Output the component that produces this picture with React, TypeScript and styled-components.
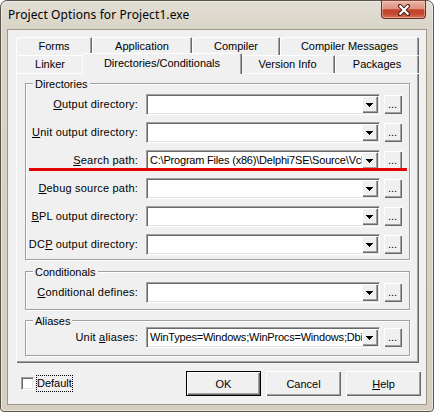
import React from "react";
import styled, { createGlobalStyle } from "styled-components";

const Global = createGlobalStyle`
  html, body { margin: 0; padding: 0; background: #ffffff; }
  body { font-family: "Liberation Sans", Arial, sans-serif; font-size: 11px; color: #000; }
  * { box-sizing: border-box; }
`;

const Window = styled.div`
  width: 434px;
  height: 412px;
  border: 1px solid #5a554c;
  border-radius: 7px 7px 4px 4px;
  background: linear-gradient(to bottom, #e2ded5 0px, #d9d4c7 28px, #d6cfbf 100%);
  box-shadow: inset 0 0 0 1px rgba(255, 255, 255, 0.45);
  display: flex;
  flex-direction: column;
`;

const TitleBar = styled.div`
  height: 28px;
  flex: none;
  display: flex;
  align-items: flex-start;
  justify-content: space-between;
  padding: 0 7px;
`;

const Title = styled.div`
  font-family: "Noto Sans", "Open Sans", sans-serif;
  font-size: 12px;
  line-height: 16px;
  padding-top: 6px;
  color: #000;
  letter-spacing: 0.1px;
`;

const CloseButton = styled.div`
  width: 45px;
  height: 19px;
  margin-top: -1px;
  border: 1px solid #6b2f25;
  border-top-color: #7a4a40;
  border-radius: 0 0 4px 4px;
  background: linear-gradient(
    to bottom,
    #eab5a7 0%,
    #de917f 45%,
    #c4432d 52%,
    #c54630 75%,
    #d8715b 100%
  );
  box-shadow: inset 0 0 0 1px rgba(255, 220, 210, 0.45);
  display: flex;
  align-items: center;
  justify-content: center;
`;

const Client = styled.div`
  flex: 1;
  margin: 0 6px 6px 6px;
  border: 1px solid #9d978a;
  background: #f0f0f0;
  display: flex;
  flex-direction: column;
  padding: 7px 7px 7px 8px;
`;

const TabStrip = styled.div`
  display: flex;
  flex-direction: column;
`;

const TabRow = styled.div`
  display: flex;
  height: 18px;
`;

const Tab = styled.div<{ $w: number; $active?: boolean }>`
  flex: none;
  width: ${(p) => p.$w + (p.$active ? 4 : 0)}px;
  height: ${(p) => (p.$active ? 21 : 18)}px;
  margin: ${(p) => (p.$active ? "-2px -2px 0 -2px" : "0")};
  padding-top: ${(p) => (p.$active ? 1 : 0)}px;
  position: ${(p) => (p.$active ? "relative" : "static")};
  z-index: ${(p) => (p.$active ? 2 : "auto")};
  background: #f0f0f0;
  border-radius: 2px 2px 0 0;
  box-shadow: inset 1px 1px 0 #ffffff, inset -1px 0 0 #696969, inset -2px 0 0 #a0a0a0;
  text-align: center;
  line-height: 18px;
  white-space: nowrap;
`;

const Page = styled.div`
  height: 290px;
  padding: 10px 9px 6px 9px;
  background: #f0f0f0;
  box-shadow: inset 1px 1px 0 #ffffff, inset -1px -1px 0 #696969, inset -2px -2px 0 #a0a0a0;
  display: flex;
  flex-direction: column;
`;

const Group = styled.div<{ $pb: number; $mt: number }>`
  margin-top: ${(p) => p.$mt}px;
  padding: 0 7px ${(p) => p.$pb}px 0;
  border: 1px solid #a0a0a0;
  box-shadow: inset 1px 1px 0 #ffffff, 1px 1px 0 #ffffff;
`;

const GroupTitle = styled.div`
  display: table;
  height: 13px;
  line-height: 13px;
  margin: -6px 0 -7px 7px;
  padding: 0 2px;
  background: #f0f0f0;
`;

const Rows = styled.div<{ $pt: number }>`
  padding-top: ${(p) => p.$pt}px;
  display: flex;
  flex-direction: column;
  gap: 7px;
`;

const Row = styled.div`
  position: relative;
  display: flex;
  align-items: center;
  height: 21px;
`;

const Label = styled.div`
  width: 112px;
  margin-right: 8px;
  padding-bottom: 1px;
  text-align: right;
  white-space: nowrap;
  letter-spacing: 0.2px;
`;

const Combo = styled.div`
  width: 234px;
  height: 21px;
  border: 1px solid;
  border-color: #a0a0a0 #ffffff #ffffff #a0a0a0;
  box-shadow: inset 1px 1px 0 #696969, inset -1px -1px 0 #e3e3e3;
  padding: 1px;
  background: #ffffff;
  display: flex;
`;

const ComboText = styled.div`
  flex: 1;
  overflow: hidden;
  white-space: nowrap;
  padding-left: 2px;
  line-height: 17px;
  letter-spacing: -0.2px;
`;

const DropButton = styled.div`
  flex: none;
  width: 16px;
  height: 17px;
  background: #f0f0f0;
  box-shadow: inset 1px 1px 0 #ffffff, inset -1px -1px 0 #696969, inset -2px -2px 0 #a0a0a0;
  display: flex;
  align-items: center;
  justify-content: center;
  padding: 1px 1px 0 0;
`;

const EllipsisButton = styled.div`
  flex: none;
  width: 18px;
  height: 19px;
  margin-left: 4px;
  background: #f0f0f0;
  box-shadow: inset 1px 1px 0 #ffffff, inset -1px -1px 0 #696969, inset -2px -2px 0 #a0a0a0;
  text-align: center;
  line-height: 18px;
  padding-right: 1px;
`;

const RedMark = styled.div`
  position: absolute;
  left: 3px;
  top: 18px;
  width: 378px;
  height: 3px;
  background: #e50000;
`;

const Footer = styled.div`
  margin-top: 8px;
  margin-right: -2px;
  height: 25px;
  display: flex;
  align-items: center;
  justify-content: space-between;
`;

const CheckRow = styled.div`
  display: flex;
  align-items: center;
  margin-left: 5px;
`;

const CheckBox = styled.div`
  width: 13px;
  height: 13px;
  border: 1px solid;
  border-color: #a0a0a0 #ffffff #ffffff #a0a0a0;
  box-shadow: inset 1px 1px 0 #696969, inset -1px -1px 0 #e3e3e3;
  background: #ffffff;
`;

const FocusLabel = styled.div`
  margin-left: 2px;
  border: 1px dotted #000;
  line-height: 15px;
`;

const Buttons = styled.div`
  display: flex;
  gap: 5px;
`;

const PushButton = styled.div<{ $default?: boolean }>`
  width: 75px;
  height: 25px;
  background: #f0f0f0;
  border: ${(p) => (p.$default ? "1px solid #000" : "none")};
  box-shadow: inset 1px 1px 0 #ffffff, inset -1px -1px 0 #696969, inset -2px -2px 0 #a0a0a0;
  display: flex;
  align-items: center;
  justify-content: center;
`;

const Arrow = () => (
  <svg width="7" height="4" viewBox="0 0 7 4" shapeRendering="crispEdges">
    <polygon points="0,0 7,0 3.5,4" fill="#000" />
  </svg>
);

const CloseGlyph = () => (
  <svg width="14" height="12" viewBox="0 0 14 12">
    <path d="M3 2 L11 10 M11 2 L3 10" stroke="#4a1d14" strokeWidth="4" strokeLinecap="round" />
    <path d="M3.3 2.3 L10.7 9.7 M10.7 2.3 L3.3 9.7" stroke="#ffffff" strokeWidth="2.2" strokeLinecap="square" />
  </svg>
);

type Field = {
  label: React.ReactNode;
  value?: string;
  mark?: boolean;
};

const FieldRow = ({ label, value, mark }: Field) => (
  <Row>
    <Label>{label}</Label>
    <Combo>
      <ComboText>{value}</ComboText>
      <DropButton>
        <Arrow />
      </DropButton>
    </Combo>
    <EllipsisButton>...</EllipsisButton>
    {mark && <RedMark />}
  </Row>
);

const row1 = [
  { t: "Forms", w: 76 },
  { t: "Application", w: 100 },
  { t: "Compiler", w: 88 },
  { t: "Compiler Messages", w: 139 },
];
const row2 = [
  { t: "Linker", w: 68 },
  { t: "Directories/Conditionals", w: 156, active: true },
  { t: "Version Info", w: 95 },
  { t: "Packages", w: 84 },
];

export default function App() {
  return (
    <>
      <Global />
      <Window>
        <TitleBar>
          <Title>Project Options for Project1.exe</Title>
          <CloseButton>
            <CloseGlyph />
          </CloseButton>
        </TitleBar>
        <Client>
          <TabStrip>
            <TabRow>
              {row1.map((t) => (
                <Tab key={t.t} $w={t.w}>
                  {t.t}
                </Tab>
              ))}
            </TabRow>
            <TabRow>
              {row2.map((t) => (
                <Tab key={t.t} $w={t.w} $active={t.active}>
                  {t.t}
                </Tab>
              ))}
            </TabRow>
            <Page>
              <Group $mt={0} $pb={4}>
                <GroupTitle>Directories</GroupTitle>
                <Rows $pt={10}>
                  <FieldRow label={<><u>O</u>utput directory:</>} />
                  <FieldRow label={<><u>U</u>nit output directory:</>} />
                  <FieldRow
                    label={<><u>S</u>earch path:</>}
                    value="C:\Program Files (x86)\Delphi7SE\Source\Vcl;C:\Program Files (x86)\Delphi7SE\Source\Rtl"
                    mark
                  />
                  <FieldRow label={<><u>D</u>ebug source path:</>} />
                  <FieldRow label={<><u>B</u>PL output directory:</>} />
                  <FieldRow label={<>DC<u>P</u> output directory:</>} />
                </Rows>
              </Group>
              <Group $mt={11} $pb={6}>
                <GroupTitle>Conditionals</GroupTitle>
                <Rows $pt={10}>
                  <FieldRow label={<><u>C</u>onditional defines:</>} />
                </Rows>
              </Group>
              <Group $mt={10} $pb={7}>
                <GroupTitle>Aliases</GroupTitle>
                <Rows $pt={6}>
                  <FieldRow
                    label={<>Unit <u>a</u>liases:</>}
                    value="WinTypes=Windows;WinProcs=Windows;DbiTypes=BDE;DbiProcs=BDE;DbiErrs=BDE"
                  />
                </Rows>
              </Group>
            </Page>
          </TabStrip>
          <Footer>
            <CheckRow>
              <CheckBox />
              <FocusLabel>Default</FocusLabel>
            </CheckRow>
            <Buttons>
              <PushButton $default>OK</PushButton>
              <PushButton>Cancel</PushButton>
              <PushButton>
                <span>
                  <u>H</u>elp
                </span>
              </PushButton>
            </Buttons>
          </Footer>
        </Client>
      </Window>
    </>
  );
}
